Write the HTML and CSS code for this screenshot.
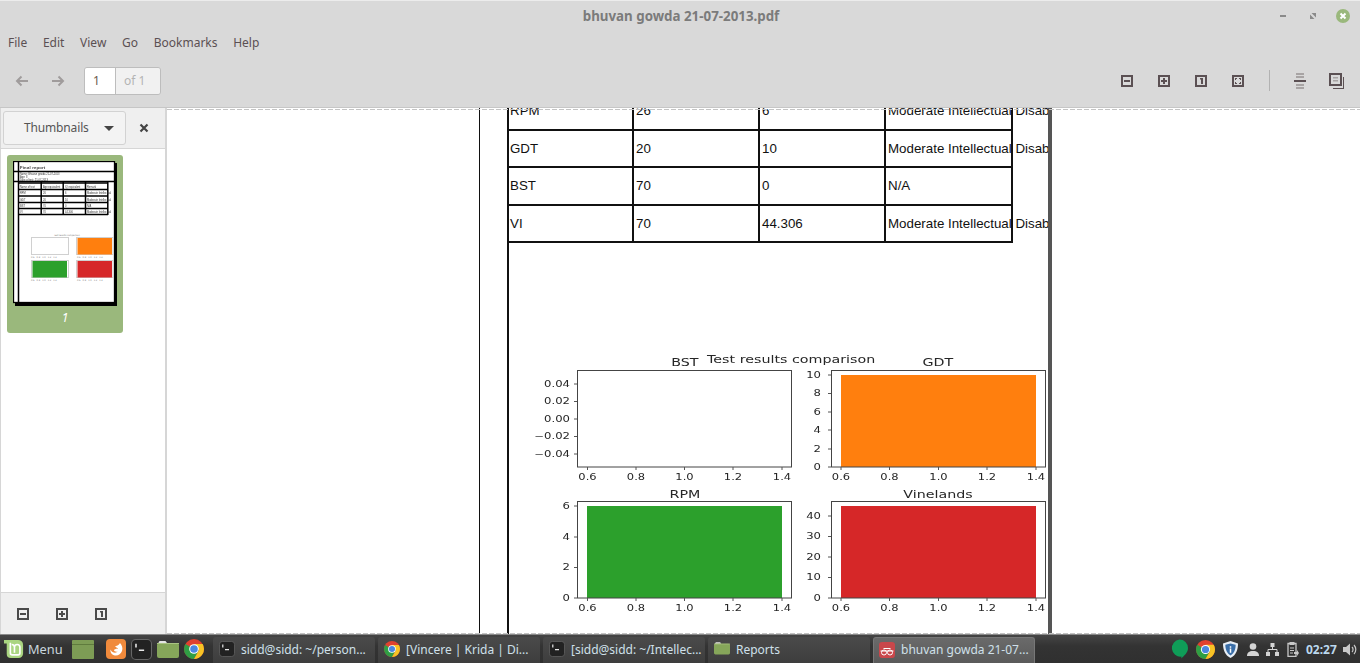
FILE: index.html
```html
<!DOCTYPE html>
<html lang="en">
<head>
<meta charset="utf-8">
<title>bhuvan gowda 21-07-2013.pdf</title>
<link rel="stylesheet" href="styles.css">
</head>
<body>
<svg class="defs" width="0" height="0" aria-hidden="true">
  <symbol id="i-out" viewBox="0 0 12 12"><path d="M1 1h10v10H1z" fill="none" stroke="currentColor" stroke-width="2"/><path d="M3 5h6v2H3z" fill="currentColor"/></symbol>
  <symbol id="i-in" viewBox="0 0 12 12"><path d="M1 1h10v10H1z" fill="none" stroke="currentColor" stroke-width="2"/><path d="M3 5h2V3h2v2h2v2H7v2H5V7H3z" fill="currentColor"/></symbol>
  <symbol id="i-one" viewBox="0 0 12 12"><path d="M1 1h10v10H1z" fill="none" stroke="currentColor" stroke-width="2"/><path d="M5 3h3v6H6V4.500H5z" fill="currentColor"/></symbol>
  <symbol id="i-fit" viewBox="0 0 12 12"><path d="M1 1h10v10H1z" fill="none" stroke="currentColor" stroke-width="2"/><path d="M3 3h2v1H4v1H3zM7 3h2v2H8V4H7zM3 7h1v1h1v1H3zM8 7h1v2H7V8h1z" fill="currentColor"/></symbol>
  <symbol id="i-term" viewBox="0 0 20 20"><rect x="0.500" y="0.500" width="19" height="19" rx="4" fill="#222" stroke="#666"/><path d="M4 4.500h1.500v3.500H4zM7.500 10h5v1.500h-5z" fill="#e8e8e8"/></symbol>
  <symbol id="i-folder" viewBox="0 0 22 18"><path d="M1 3.500 2.500 1h6L10 3z" fill="#e4e4e4"/><rect x="0" y="3" width="22" height="15" rx="2" fill="#86a65a"/><rect x="0" y="3" width="22" height="1" fill="#a9c382"/></symbol>
  <symbol id="i-chrome" viewBox="0 0 20 20"><circle cx="10" cy="10" r="10" fill="#e0412f"/><path d="M10 10 1.340 5A10 10 0 0 0 10 20l5-8.660z" fill="#2f9e44"/><path d="M10 5h8.660A10 10 0 0 1 10 20l5-8.660z" fill="#f7c325"/><circle cx="10" cy="10" r="4.800" fill="#fff"/><circle cx="10" cy="10" r="3.800" fill="#4a86e0"/></symbol>
</svg>

<div class="window">
  <header class="titlebar">
    <div class="title-side title-lead"></div>
    <div class="title">bhuvan gowda 21-07-2013.pdf</div>
    <div class="title-side win-buttons">
      <svg class="win-btn" viewBox="0 0 16 16"><rect x="5" y="7" width="6" height="2" fill="#8a8a8a"/></svg>
      <svg class="win-btn" viewBox="0 0 16 16"><path d="M6.500 5H11v4.500zM5 6.500 9.500 11H5z" fill="#8a8a8a"/></svg>
      <svg class="win-btn" viewBox="0 0 16 16"><circle cx="8" cy="8" r="7" fill="#9ab87c"/><path d="m5.500 5.500 5 5m0-5-5 5" stroke="#fff" stroke-width="2"/></svg>
    </div>
  </header>

  <nav class="menubar">
    <span>File</span><span>Edit</span><span>View</span><span>Go</span><span>Bookmarks</span><span>Help</span>
  </nav>

  <div class="toolbar">
    <svg class="tool-icon nav-icon" viewBox="0 0 16 16"><path d="M14 8H3M7.500 3.500 3 8l4.500 4.500" fill="none" stroke="currentColor" stroke-width="2"/></svg>
    <svg class="tool-icon nav-icon gap-nav" viewBox="0 0 16 16"><path d="M2 8h11M8.500 3.500 13 8l-4.500 4.500" fill="none" stroke="currentColor" stroke-width="2"/></svg>
    <div class="page-entry"><span class="page-num">1</span><span class="page-of">of 1</span></div>
    <div class="tool-spacer"></div>
    <div class="tool-group">
      <svg class="tool-icon"><use href="#i-out" x="2" y="2" width="12" height="12"/></svg>
      <svg class="tool-icon"><use href="#i-in" x="2" y="2" width="12" height="12"/></svg>
      <svg class="tool-icon"><use href="#i-one" x="2" y="2" width="12" height="12"/></svg>
      <svg class="tool-icon"><use href="#i-fit" x="2" y="2" width="12" height="12"/></svg>
    </div>
    <div class="tool-sep"></div>
    <div class="tool-group">
      <svg class="tool-icon" viewBox="0 0 16 16"><path d="M4 0h8v2H4zM4 3h8v2H4zM4 11h8v2H4zM4 14h8v2H4z" fill="#a8a4a4"/><path d="M2 7h12v2H2z" fill="#5b5053"/></svg>
      <svg class="tool-icon" viewBox="0 0 16 16"><path d="M1 1h11v11H1z" fill="none" stroke="#5b5053" stroke-width="2"/><path d="M14 4h1v12H4v-1h10z" fill="#5b5053"/><path d="M4 4h5v1.500H4zM4 7h5v1.500H4z" fill="#a8a4a4"/></svg>
    </div>
  </div>

  <div class="main">
    <aside class="sidebar">
      <div class="side-head">
        <div class="side-select"><span>Thumbnails</span><i class="caret"></i></div>
        <svg class="side-close" viewBox="0 0 10 10"><path d="m1.500 1.500 7 7m0-7-7 7" stroke="#444" stroke-width="2.200"/></svg>
      </div>
      <div class="side-list">
        <figure class="thumb">
          <svg class="thumb-page" viewBox="13 161 105 146">
            <rect x="15" y="163" width="102" height="143" fill="#000"/>
            <rect x="13.500" y="161.500" width="101" height="141" fill="#fff" stroke="#000" stroke-width="1.300"/>
            <path class="th-line" d="M18.500 161v142M13 171.500h102M13 181.500h102"/>
            <text class="th-h" x="20" y="169">Final report</text>
            <text class="th-t" x="20" y="175">Name: Bhuvan gowda 21-07-2013</text>
            <text class="th-t" x="20" y="178">Age: 8</text>
            <text class="th-t" x="20" y="181">Date of test: 21-07-2013</text>
            <path class="th-line" d="M19 183h89M19 189.500h89M19 196h89M19 202.500h89M19 208.500h89M19 214.500h89M41.200 182v33M63.200 182v33M85.500 182v33M107.800 182v33"/>
            <text class="th-t" x="20" y="187.500">Name of test</text><text class="th-t" x="43" y="187.500">Age equivalent</text><text class="th-t" x="65" y="187.500">IQ equivalent</text><text class="th-t" x="87" y="187.500">Remark</text>
            <text class="th-t" x="20" y="194">RPM</text><text class="th-t" x="43" y="194">26</text><text class="th-t" x="65" y="194">6</text><text class="th-t" x="87" y="194">Moderate Intellectual</text>
            <text class="th-t" x="20" y="200.500">GDT</text><text class="th-t" x="43" y="200.500">20</text><text class="th-t" x="65" y="200.500">10</text><text class="th-t" x="87" y="200.500">Moderate Intellectual</text>
            <text class="th-t" x="20" y="207">BST</text><text class="th-t" x="43" y="207">70</text><text class="th-t" x="65" y="207">0</text><text class="th-t" x="87" y="207">N/A</text>
            <text class="th-t" x="20" y="213">VI</text><text class="th-t" x="43" y="213">70</text><text class="th-t" x="65" y="213">44.306</text><text class="th-t" x="87" y="213">Moderate Intellectual</text>
            <text class="th-s" x="54" y="236">Test results comparison</text>
            <rect class="th-box" x="31.500" y="237.500" width="37" height="17"/>
            <rect class="th-box" x="76.500" y="237.500" width="36.500" height="17"/>
            <rect x="77.500" y="238" width="34.500" height="16.500" fill="#ff7f0e"/>
            <rect class="th-box" x="31.500" y="260.500" width="37" height="17"/>
            <rect x="32.500" y="261" width="34.500" height="16.500" fill="#2ca02c"/>
            <rect class="th-box" x="76.500" y="260.500" width="36.500" height="17"/>
            <rect x="77.500" y="261" width="34.500" height="16.500" fill="#d62728"/>
            <text class="th-s" x="31" y="257.500">0.6 &#160; 0.8 &#160; 1.0 &#160; 1.2 &#160; 1.4</text>
            <text class="th-s" x="77" y="257.500">0.6 &#160; 0.8 &#160; 1.0 &#160; 1.2 &#160; 1.4</text>
            <text class="th-s" x="31" y="280.500">0.6 &#160; 0.8 &#160; 1.0 &#160; 1.2 &#160; 1.4</text>
            <text class="th-s" x="77" y="280.500">0.6 &#160; 0.8 &#160; 1.0 &#160; 1.2 &#160; 1.4</text>
          </svg>
          <figcaption>1</figcaption>
        </figure>
      </div>
      <div class="side-foot">
        <svg class="foot-icon"><use href="#i-out"/></svg>
        <svg class="foot-icon"><use href="#i-in"/></svg>
        <svg class="foot-icon"><use href="#i-one"/></svg>
      </div>
    </aside>

    <section class="viewer">
      <div class="sheet">
        <div class="page">
          <table class="report">
            <tr><td>RPM</td><td>26</td><td>6</td><td>Moderate Intellectual Disability</td></tr>
            <tr><td>GDT</td><td>20</td><td>10</td><td>Moderate Intellectual Disability</td></tr>
            <tr><td>BST</td><td>70</td><td>0</td><td>N/A</td></tr>
            <tr><td>VI</td><td>70</td><td>44.306</td><td>Moderate Intellectual Disability</td></tr>
          </table>
          <svg class="charts" viewBox="509 350 539 284">
            <text class="ct" x="791" y="363">Test results comparison</text>

            <text class="ct" x="685" y="366">BST</text>
            <rect class="ax" x="577.500" y="370.500" width="214" height="96.500"/>
            <path class="tk" d="M574 384h3M574 401.500h3M574 419h3M574 436.500h3M574 454h3M587.500 467v3M636 467v3M684.500 467v3M733 467v3M782 467v3"/>
            <text class="ty" x="570" y="387">0.04</text><text class="ty" x="570" y="404.500">0.02</text><text class="ty" x="570" y="422">0.00</text><text class="ty" x="570" y="439.500">−0.02</text><text class="ty" x="570" y="457">−0.04</text>
            <text class="tx" x="587.500" y="480">0.6</text><text class="tx" x="636" y="480">0.8</text><text class="tx" x="684.500" y="480">1.0</text><text class="tx" x="733" y="480">1.2</text><text class="tx" x="782" y="480">1.4</text>

            <text class="ct" x="938" y="366">GDT</text>
            <rect x="841" y="375" width="195" height="92" fill="#ff7f0e"/>
            <rect class="ax" x="831.500" y="370.500" width="214" height="96.500"/>
            <path class="tk" d="M828 375h3M828 393.500h3M828 412h3M828 430h3M828 449h3M828 467h3M841 467v3M889.500 467v3M938.500 467v3M987 467v3M1036 467v3"/>
            <text class="ty" x="821" y="378">10</text><text class="ty" x="821" y="396.500">8</text><text class="ty" x="821" y="415">6</text><text class="ty" x="821" y="433">4</text><text class="ty" x="821" y="452">2</text><text class="ty" x="821" y="470">0</text>
            <text class="tx" x="841" y="480">0.6</text><text class="tx" x="889.500" y="480">0.8</text><text class="tx" x="938.500" y="480">1.0</text><text class="tx" x="987" y="480">1.2</text><text class="tx" x="1036" y="480">1.4</text>

            <text class="ct" x="685" y="498">RPM</text>
            <rect x="587" y="506" width="195" height="92" fill="#2ca02c"/>
            <rect class="ax" x="577.500" y="501.500" width="214" height="96.500"/>
            <path class="tk" d="M574 506h3M574 537h3M574 567.500h3M574 598h3M587.500 598v3M636 598v3M684.500 598v3M733 598v3M782 598v3"/>
            <text class="ty" x="570" y="509">6</text><text class="ty" x="570" y="540">4</text><text class="ty" x="570" y="570.500">2</text><text class="ty" x="570" y="601">0</text>
            <text class="tx" x="587.500" y="611">0.6</text><text class="tx" x="636" y="611">0.8</text><text class="tx" x="684.500" y="611">1.0</text><text class="tx" x="733" y="611">1.2</text><text class="tx" x="782" y="611">1.4</text>

            <text class="ct" x="938" y="498">Vinelands</text>
            <rect x="841" y="506" width="195" height="92" fill="#d62728"/>
            <rect class="ax" x="831.500" y="501.500" width="214" height="96.500"/>
            <path class="tk" d="M828 516h3M828 536.500h3M828 557h3M828 577.500h3M828 598h3M841 598v3M889.500 598v3M938.500 598v3M987 598v3M1036 598v3"/>
            <text class="ty" x="821" y="519">40</text><text class="ty" x="821" y="539.500">30</text><text class="ty" x="821" y="560">20</text><text class="ty" x="821" y="580.500">10</text><text class="ty" x="821" y="601">0</text>
            <text class="tx" x="841" y="611">0.6</text><text class="tx" x="889.500" y="611">0.8</text><text class="tx" x="938.500" y="611">1.0</text><text class="tx" x="987" y="611">1.2</text><text class="tx" x="1036" y="611">1.4</text>
          </svg>
        </div>
      </div>
    </section>
  </div>
</div>

<footer class="taskbar">
  <div class="start">
    <svg class="mint" viewBox="0 0 22 22"><path d="M0 1h15.500a5.500 5.500 0 0 1 5.500 5.500V16a5 5 0 0 1-5 5H7.500A4.500 4.500 0 0 1 3 16.500V5H0z" fill="#aad581"/><path d="M7 4v11.500a2 2 0 0 0 2 2h6.500a2 2 0 0 0 2-2V9a3 3 0 0 0-6 0v6m0-6a3 3 0 0 0-3-3" fill="none" stroke="#fff" stroke-width="1.800"/></svg>
    <span>Menu</span>
  </div>
  <div class="launchers">
    <svg class="lnch lnch-desk" viewBox="0 0 22 19"><rect width="22" height="19" rx="1" fill="#7d9c55"/><rect y="4" width="22" height="1" fill="#5f7b3d"/></svg>
    <svg class="lnch lnch-fox" viewBox="0 0 20 20"><rect width="20" height="20" rx="4" fill="#f08a3c"/><path d="M14 4c2 2 3 5 2 8-1 3-4 5-7 4.500C6 16 4 13.500 4.500 10.500 6 14 10 14.500 12 12.500c-2 .5-4 0-4-1.500 1-1.500 3-.5 4-1.500-1-1-2-1-3-2 1-.5 4-1 5-3.500z" fill="#fff"/></svg>
    <svg class="lnch lnch-term"><use href="#i-term" width="21" height="21"/></svg>
    <svg class="lnch lnch-folder"><use href="#i-folder" width="22" height="18"/></svg>
    <svg class="lnch lnch-chrome"><use href="#i-chrome" width="20" height="20"/></svg>
  </div>
  <div class="tasks">
    <div class="task"><svg class="task-icon"><use href="#i-term" width="16" height="16"/></svg><span>sidd@sidd: ~/person...</span></div>
    <div class="task"><svg class="task-icon"><use href="#i-chrome" width="16" height="16"/></svg><span>[Vincere | Krida | Di...</span></div>
    <div class="task"><svg class="task-icon"><use href="#i-term" width="16" height="16"/></svg><span>[sidd@sidd: ~/Intellec...</span></div>
    <div class="task"><svg class="task-icon"><use href="#i-folder" width="16" height="14"/></svg><span>Reports</span></div>
    <div class="task active"><svg class="task-icon" viewBox="0 0 16 16"><rect width="16" height="16" rx="3" fill="#c9474b"/><path d="M1.500 9h13M4.500 6.500h7" stroke="#fff"/><circle cx="5" cy="10.500" r="2.500" fill="none" stroke="#fff"/><circle cx="11" cy="10.500" r="2.500" fill="none" stroke="#fff"/></svg><span>bhuvan gowda 21-07...</span></div>
  </div>
  <div class="tray">
    <svg class="tr-chat" viewBox="0 0 18 21"><path d="M9 0a9 9 0 0 1 9 9c0 5-4 8-7 11v-2A9 9 0 0 1 9 0z" fill="#0f9d58"/></svg>
    <svg class="tr-chrome"><use href="#i-chrome" width="19" height="19"/></svg>
    <svg class="tr-shield" viewBox="0 0 16 18"><path d="M8 0 16 2.500C16 9 14 15 8 18 2 15 0 9 0 2.500z" fill="#e8eef5"/><path d="M8 2.500 13.500 4c0 5-1.500 9-5.500 11.500C4 13 2.500 9 2.500 4z" fill="#3a6ea8"/><path d="M7.200 5.500h1.600v1.500H7.200zM7.200 8h1.600v4.500H7.200z" fill="#fff"/></svg>
    <svg class="tr-user" viewBox="0 0 12 13"><circle cx="6" cy="3.500" r="3.300" fill="#d4d4d4"/><path d="M0 13c0-3.500 2-5 6-5s6 1.500 6 5z" fill="#d4d4d4"/></svg>
    <svg class="tr-net" viewBox="0 0 13 13"><path d="M4.500 0h4v4h-4zM0 9h4v4H0zM9 9h4v4H9z" fill="#d4d4d4"/><path d="M6.500 4v3M2 9V6.500h9V9" fill="none" stroke="#d4d4d4"/></svg>
    <svg class="tr-clip" viewBox="0 0 12 16"><path d="M1 2.500h8v13H1z" fill="none" stroke="#c8c8c8" stroke-width="1.300"/><path d="M2.500 1h5v3h-5z" fill="#c8c8c8"/><path d="M3 7h4M3 9.500h4M3 12h3" stroke="#c8c8c8"/><path d="M7 11h3V9l2 3-2 3v-2H7z" fill="#c8c8c8"/></svg>
    <span class="clock">02:27</span>
    <svg class="tr-vol" viewBox="0 0 14 13"><path d="M0 4h3l4-3.500v12L3 9H0z" fill="#c8c8c8"/><path d="M9 4a3.500 3.500 0 0 1 0 5M11 2a6.500 6.500 0 0 1 0 9" fill="none" stroke="#c8c8c8" stroke-width="1.200"/></svg>
  </div>
</footer>
</body>
</html>
```
FILE: styles.css
```css
* { box-sizing: border-box; }
html, body { margin: 0; height: 100%; overflow: hidden; }
body { font-family: "Noto Sans", sans-serif; font-size: 12px; color: #5b5053; background: #d9d9d9; }
.defs { position: absolute; }
svg { display: block; flex: none; }

.window { height: 634px; display: flex; flex-direction: column; border-top: 1px solid #ececec; }

.titlebar { height: 29px; flex: none; display: flex; align-items: center; }
.title-side { flex: 1; }
.title-lead { padding-left: 11px; }
.title { font-size: 13.330px; font-weight: 700; color: #7b7b7b; }
.win-buttons { display: flex; justify-content: flex-end; gap: 14px; padding-right: 9px; }
.win-btn { width: 16px; height: 16px; }

.menubar { height: 26px; flex: none; display: flex; align-items: center; gap: 15.700px; padding: 0 0 2px 8px; }

.toolbar { height: 52px; flex: none; display: flex; align-items: center; padding: 0 15px 2px 14px; border-bottom: 1px solid #c6c6c6; }
.tool-icon { width: 16px; height: 16px; color: #5b5053; }
.nav-icon { color: #a09c9c; }
.gap-nav { margin-left: 20px; }
.page-entry { display: flex; margin-left: 18px; height: 28px; border: 1px solid #bdbdbd; border-radius: 3px; overflow: hidden; }
.page-entry span { display: flex; align-items: center; padding-left: 8px; }
.page-num { width: 31px; background: #fff; border-right: 1px solid #bdbdbd; color: #6b5a4e; }
.page-of { width: 44px; background: #f1f1f1; color: #b4b4b4; }
.tool-spacer { flex: 1; }
.tool-group { display: flex; gap: 21px; }
.tool-sep { width: 1px; height: 21px; margin: 0 22px 0 23px; background: #b2b2b2; }

.main { flex: 1; min-height: 0; display: flex; }
.sidebar { width: 167px; flex: none; display: flex; flex-direction: column; background: #efefef; border-left: 1px solid #d6d6d6; border-right: 2px solid #d6d6d6; }
.side-head { height: 41px; flex: none; display: flex; align-items: center; padding-left: 2px; border-bottom: 1px solid #d6d6d6; }
.side-select { width: 123px; height: 34px; display: flex; align-items: center; padding: 0 0 2px 20px; background: #f3f3f3; border: 1px solid #d2d2d2; border-radius: 3px; color: #555; }
.side-select span { width: 71px; white-space: nowrap; letter-spacing: -0.150px; }
.caret { width: 0; height: 0; margin: 2px 0 0 9px; border: 5px solid transparent; border-top: 5px solid #444; border-bottom: 0; }
.side-close { width: 10px; height: 10px; margin-left: 13px; }
.side-list { flex: 1; background: #fff; padding: 6px 6px; }
.thumb { width: 116px; height: 178px; margin: 0; padding: 6px 6px 0; background: #9ab87c; border-radius: 3px; }
.thumb-page { width: 105px; height: 146px; }
.thumb figcaption { margin-top: 3px; text-align: center; color: #fff; font-style: italic; font-size: 12px; line-height: 16px; }
.th-h { font: 700 4.200px "Liberation Sans", sans-serif; fill: #333; letter-spacing: 0.200px; filter: blur(0.2px); }
.th-t { font: 2.600px "Liberation Sans", sans-serif; fill: #333; filter: blur(0.15px); }
.th-s { font: 2.200px "DejaVu Sans", sans-serif; fill: #777; }
.th-line { fill: none; stroke: #000; stroke-width: 1.500; }
.th-box { fill: #fff; stroke: #d0d0d0; stroke-width: 1; }
.side-foot { height: 42px; flex: none; display: flex; align-items: center; gap: 27px; padding-left: 16px; border-top: 1px solid #d6d6d6; }
.foot-icon { width: 12px; height: 12px; color: #4a4a4a; }

.viewer { flex: 1; min-width: 0; position: relative; overflow: hidden; background: #fff; }
.viewer::before, .viewer::after { content: ""; position: absolute; left: 0; right: 0; height: 1px; z-index: 2; background: repeating-linear-gradient(90deg, #c4c4c4 0 5px, transparent 5px 7px); }
.viewer::before { top: 1px; }
.viewer::after { bottom: 0; }
.sheet { width: 574px; height: 800px; margin-left: 312px; padding-left: 27px; border-left: 1px solid #111; }
.page { width: 545px; height: 800px; overflow: hidden; border-left: 2px solid #111; border-right: 4px solid #555; }
.report { width: 504px; margin-top: -15px; table-layout: fixed; border-collapse: separate; border-spacing: 0; font: 13.330px "Liberation Sans", Arial, sans-serif; color: #111; }
.report td { height: 37.500px; width: 126px; padding: 0 0 0 2px; white-space: nowrap; border-right: 2px solid #111; border-bottom: 2px solid #111; }
.report td:first-child { width: 125px; padding-left: 1px; }
.report td:last-child { width: 127px; }
.charts { width: 539px; height: 284px; margin-top: 107px; filter: blur(0.3px); }
.ct, .tx, .ty { font-family: "DejaVu Sans", sans-serif; fill: #262626; transform-box: fill-box; }
.ct { font-size: 10.500px; text-anchor: middle; transform: scaleX(1.36); transform-origin: center; }
.tx { font-size: 8.200px; text-anchor: middle; transform: scaleX(1.4); transform-origin: center; }
.ty { font-size: 8.200px; text-anchor: end; transform: scaleX(1.42); transform-origin: right center; }
.ax { fill: none; stroke: #444; stroke-width: 1; }
.tk { fill: none; stroke: #555; stroke-width: 1; }

.taskbar { height: 29px; display: flex; align-items: center; background: linear-gradient(#454545, #333 40%, #303030); border-top: 1px solid #8a8a8a; color: #d8d8d8; }
.start { width: 66px; flex: none; display: flex; align-items: center; gap: 4px; padding-left: 4px; font-size: 12.800px; color: #c9d6dd; }
.mint { width: 20px; height: 20px; }
.launchers { display: flex; align-items: center; width: 147px; flex: none; padding-left: 6px; }
.lnch-desk { width: 22px; height: 19px; }
.lnch-fox { width: 20px; height: 20px; margin-left: 12px; }
.lnch-term { width: 21px; height: 21px; margin-left: 5px; }
.lnch-folder { width: 22px; height: 18px; margin-left: 5px; }
.lnch-chrome { width: 20px; height: 20px; margin-left: 5px; }
.tasks { display: flex; gap: 3px; flex: none; align-self: stretch; padding-top: 2px; }
.task { width: 162px; display: flex; align-items: center; gap: 6px; padding: 0 0 2px 6px; border-radius: 3px 3px 0 0; background: linear-gradient(#4a4a4a, #3d3d3d); color: #cfe0ea; white-space: nowrap; }
.task-icon { width: 16px; height: 16px; }
.active { background: linear-gradient(#6a6a6a, #5a5a5a); border: 1px solid #777; border-bottom: 0; padding-left: 5px; }
.tray { display: flex; align-items: center; flex: 1; margin-left: 136px; }
.tr-chat { width: 17px; height: 21px; }
.tr-chrome { width: 19px; height: 19px; margin-left: 8px; }
.tr-shield { width: 15px; height: 17px; margin-left: 8px; }
.tr-user { width: 12px; height: 13px; margin-left: 9px; }
.tr-net { width: 13px; height: 13px; margin-left: 7px; }
.tr-clip { width: 12px; height: 16px; margin-left: 8px; }
.clock { margin-left: 7px; font-weight: 700; font-size: 12px; color: #bcd8ee; }
.tr-vol { width: 14px; height: 13px; margin-left: 6px; }
```
